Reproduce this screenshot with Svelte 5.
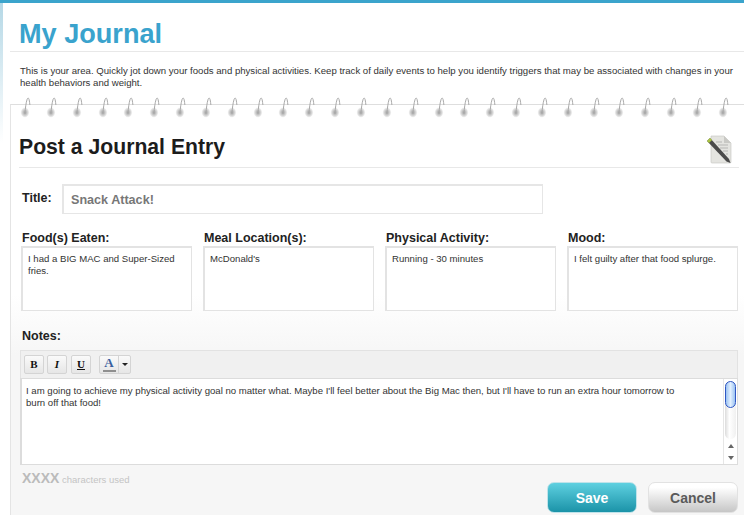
<script lang="ts">
  const spirals = Array.from({ length: 28 }, (_, i) => i);
  const fields = [
    { label: "Food(s) Eaten:", value: "I had a BIG MAC and Super-Sized fries." },
    { label: "Meal Location(s):", value: "McDonald's" },
    { label: "Physical Activity:", value: "Running - 30 minutes" },
    { label: "Mood:", value: "I felt guilty after that food splurge." },
  ];
</script>

<div class="page">
  <header>
    <h1>My Journal</h1>
    <p class="intro">
      This is your area. Quickly jot down your foods and physical activities. Keep track of daily events to help you identify triggers that may be associated with changes in your health behaviors and weight.
    </p>
  </header>

  <section class="notebook">
    <div class="spirals">
      {#each spirals as s (s)}
        <svg width="25.85" height="24" viewBox="0 0 26 24">
          <defs>
            <radialGradient id="hole{s}">
              <stop offset="0" stop-color="#a2a2a2" />
              <stop offset="0.5" stop-color="#c8c8c8" />
              <stop offset="1" stop-color="#f6f6f6" />
            </radialGradient>
          </defs>
          <ellipse cx="10" cy="16.5" rx="4.2" ry="5" fill="url(#hole{s})" />
          <path d="M10 18 C10.4 12 11 7 12.2 3.2 C12.8 1.6 13.8 1.6 14.2 3.6 C14.6 5.6 14.8 7 15 9" fill="none" stroke="#a8a8a8" stroke-width="1" />
        </svg>
      {/each}
    </div>

    <div class="heading">
      <h2>Post a Journal Entry</h2>
      <svg class="doc" width="26" height="29" viewBox="0 0 26 29">
        <path d="M5 1 H18 L25 8 V27 Q25 28 24 28 H6 Q5 28 5 27 Z" fill="#e4e4e0" stroke="#c4c4c0" stroke-width="0.6" />
        <path d="M18 1 L25 8 H18 Z" fill="#c9c9c5" />
        <path d="M10 7 H16 M12 10 H22 M14 13 H22 M17 16 H22 M20 19 H22" stroke="#aaa" stroke-width="0.8" />
        <path d="M1 6 L4 3 L23 24 L24.5 28 L20.5 26.5 Z" fill="#4a4a4a" />
        <path d="M1 6 L4 3 L6 5 L3 8 Z" fill="#a9c43f" />
      </svg>
    </div>

    <div class="title-row">
      <label for="entry-title">Title:</label>
      <input id="entry-title" value="Snack Attack!" readonly />
    </div>

    <div class="fields">
      {#each fields as f (f.label)}
        <div class="field">
          <div class="label">{f.label}</div>
          <textarea readonly value={f.value}></textarea>
        </div>
      {/each}
    </div>

    <div class="label notes-label">Notes:</div>
    <div class="toolbar">
      <button class="tool bold">B</button>
      <button class="tool ital">I</button>
      <button class="tool under">U</button>
      <div class="color">
        <span class="swatch">A</span>
        <span class="caret"></span>
      </div>
    </div>
    <div class="editor">
      <div class="editor-text">
        I am going to achieve my physical activity goal no matter what. Maybe I'll feel better about the Big Mac then, but I'll have to run an extra hour tomorrow to burn off that food!
      </div>
      <div class="scrollbar">
        <div class="track"><div class="thumb"></div></div>
        <span class="arrow up"></span>
        <span class="arrow down"></span>
      </div>
    </div>

    <div class="foot">
      <div class="count"><b>XXXX</b> characters used</div>
      <div class="actions">
        <button class="btn save">Save</button>
        <button class="btn cancel">Cancel</button>
      </div>
    </div>
  </section>
</div>

<style>
  :global(body) {
    margin: 0;
    background: #fff;
  }

  .page {
    height: 515px;
    box-sizing: border-box;
    overflow: hidden;
    border-top: 3px solid #3ba4cc;
    background: linear-gradient(to bottom, #b5d8e6, #fff 140px) 0 0 / 3px 100% no-repeat;
    font-family: "Liberation Sans", Arial, sans-serif;
  }

  header {
    padding-left: 10px;
  }

  h1 {
    margin: 0;
    padding: 14px 0 0 9px;
    height: 34px;
    border-bottom: 1px solid #e8e8e8;
    font-size: 27.1px;
    line-height: 34px;
    color: #3aa3cd;
  }

  .intro {
    margin: 0;
    padding: 13px 0 0 10px;
    font-size: 9.6px;
    line-height: 12px;
    color: #333;
  }

  .notebook {
    margin: 15px 0 0 10px;
    height: 420px;
    border-top: 1px solid #dedede;
    border-left: 1px solid #e4e4e4;
    background: linear-gradient(to bottom, #fff 190px, #f6f6f6 250px);
  }

  .spirals {
    display: flex;
    margin: -9px 0 0 4px;
    height: 24px;
  }

  .spirals svg {
    flex: none;
  }

  .heading {
    display: flex;
    justify-content: space-between;
    align-items: flex-end;
    margin: 6px 5px 0 8px;
    height: 38px;
    padding-bottom: 3px;
    border-bottom: 1px solid #e8e8e8;
  }

  h2 {
    margin: 0 0 3px;
    font-size: 21.2px;
    line-height: 28px;
    color: #1c1c1c;
  }

  .doc {
    margin-right: 7px;
  }

  .title-row {
    display: flex;
    align-items: center;
    margin: 16px 0 0 10px;
  }

  label,
  .label {
    font-size: 12.5px;
    line-height: 16px;
    font-weight: bold;
    color: #222;
  }

  .title-row label {
    width: 41px;
    flex: none;
    padding-left: 1px;
    box-sizing: border-box;
    margin-top: -2px;
  }

  .title-row input {
    width: 481px;
    height: 30px;
    box-sizing: border-box;
    margin: 0;
    padding: 0 7px;
    border: 1px solid #e6e6e6;
    border-width: 2px 1px 1px 2px;
    outline: none;
    font: bold 12.6px "Liberation Sans", Arial, sans-serif;
    color: #777;
  }

  .fields {
    display: flex;
    gap: 11px;
    margin: 16px 6px 0 10px;
  }

  .field {
    flex: 1 1 0;
    min-width: 0;
  }

  .field .label {
    padding-left: 1px;
  }

  textarea {
    display: block;
    width: 100%;
    height: 65px;
    box-sizing: border-box;
    margin: 0;
    padding: 5px 5px;
    border: 1px solid #e3e3e3;
    border-width: 2px 1px 1px 2px;
    outline: none;
    resize: none;
    overflow: hidden;
    background: #fff;
    font: 9.6px/12px "Liberation Sans", Arial, sans-serif;
    color: #333;
  }

  .notes-label {
    margin: 17px 0 0 11px;
  }

  .toolbar {
    display: flex;
    align-items: center;
    gap: 3px;
    box-sizing: border-box;
    height: 28px;
    margin: 6px 6px 0 9px;
    padding-left: 3px;
    border: 1px solid #e2e2e2;
    border-bottom: none;
    background: #f0f0f0;
  }

  .tool {
    width: 20px;
    height: 19px;
    padding: 0;
    border: 1px solid #d4d4d4;
    border-radius: 2px;
    background: linear-gradient(#fafafa, #e6e6e6);
    font: bold 11px/17px "Liberation Serif", "Times New Roman", serif;
    color: #111;
  }

  .tool.ital {
    font-style: italic;
  }

  .tool.under {
    margin-left: 1px;
    text-decoration: underline;
  }

  .color {
    display: flex;
    height: 19px;
    margin-left: 5px;
    border: 1px solid #d4d4d4;
    border-radius: 2px;
    box-sizing: border-box;
    background: linear-gradient(#fafafa, #e6e6e6);
  }

  .swatch {
    width: 19px;
    height: 17px;
    box-sizing: border-box;
    border-right: 1px solid #d4d4d4;
    text-align: center;
    font: bold 13px/14px "Liberation Serif", "Times New Roman", serif;
    color: #3a5f9e;
    background: linear-gradient(#8f8f8f, #8f8f8f) 3px 14px / 13px 2px no-repeat;
  }

  .caret {
    width: 0;
    height: 0;
    margin: 7px 2px 0 3px;
    border: 3px solid transparent;
    border-top: 3px solid #222;
    border-bottom: none;
  }

  .editor {
    display: flex;
    box-sizing: border-box;
    height: 87px;
    margin: 0 6px 0 9px;
    border: 1px solid #dcdcdc;
    border-left-width: 2px;
    background: #fff;
  }

  .editor-text {
    flex: 1;
    padding: 6px 44px 0 4px;
    font-size: 9.6px;
    line-height: 12px;
    color: #333;
  }

  .scrollbar {
    position: relative;
    flex: none;
    width: 13px;
    border-left: 1px solid #e6e6e6;
  }

  .track {
    width: 11px;
    height: 58px;
    margin: 2px 0 0 1px;
    border-radius: 6px;
    background: linear-gradient(to right, #dcdcdc, #fff 40%, #f0f0f0);
  }

  .thumb {
    height: 27px;
    box-sizing: border-box;
    border: 1px solid #2f57c4;
    border-radius: 6px;
    background: linear-gradient(to right, #9cc3f2, #e2f0ff 50%, #9cc3f2);
  }

  .arrow {
    position: absolute;
    left: 4px;
    width: 0;
    height: 0;
    border: 3px solid transparent;
  }

  .arrow.up {
    top: 65px;
    border-top: none;
    border-bottom: 4px solid #666;
  }

  .arrow.down {
    top: 77px;
    border-bottom: none;
    border-top: 4px solid #666;
  }

  .foot {
    display: flex;
    justify-content: space-between;
    margin: 0 6px 0 11px;
  }

  .count {
    margin-top: 5px;
    font-size: 9.5px;
    line-height: 16px;
    color: #c4c4c4;
  }

  .count b {
    font-size: 14px;
    color: #bbb;
  }

  .actions {
    display: flex;
    gap: 11px;
    margin-top: 17px;
  }

  .btn {
    width: 90px;
    height: 31px;
    padding: 0;
    border-radius: 7px;
    font: bold 14px "Liberation Sans", Arial, sans-serif;
  }

  .save {
    border: 1px solid #bfe3ea;
    background: linear-gradient(#5ed0e0, #1b93a8);
    color: #fff;
  }

  .cancel {
    border: 1px solid #e2e2e2;
    background: linear-gradient(#fff 15%, #c6c6c6);
    color: #5a5a5a;
  }
</style>
